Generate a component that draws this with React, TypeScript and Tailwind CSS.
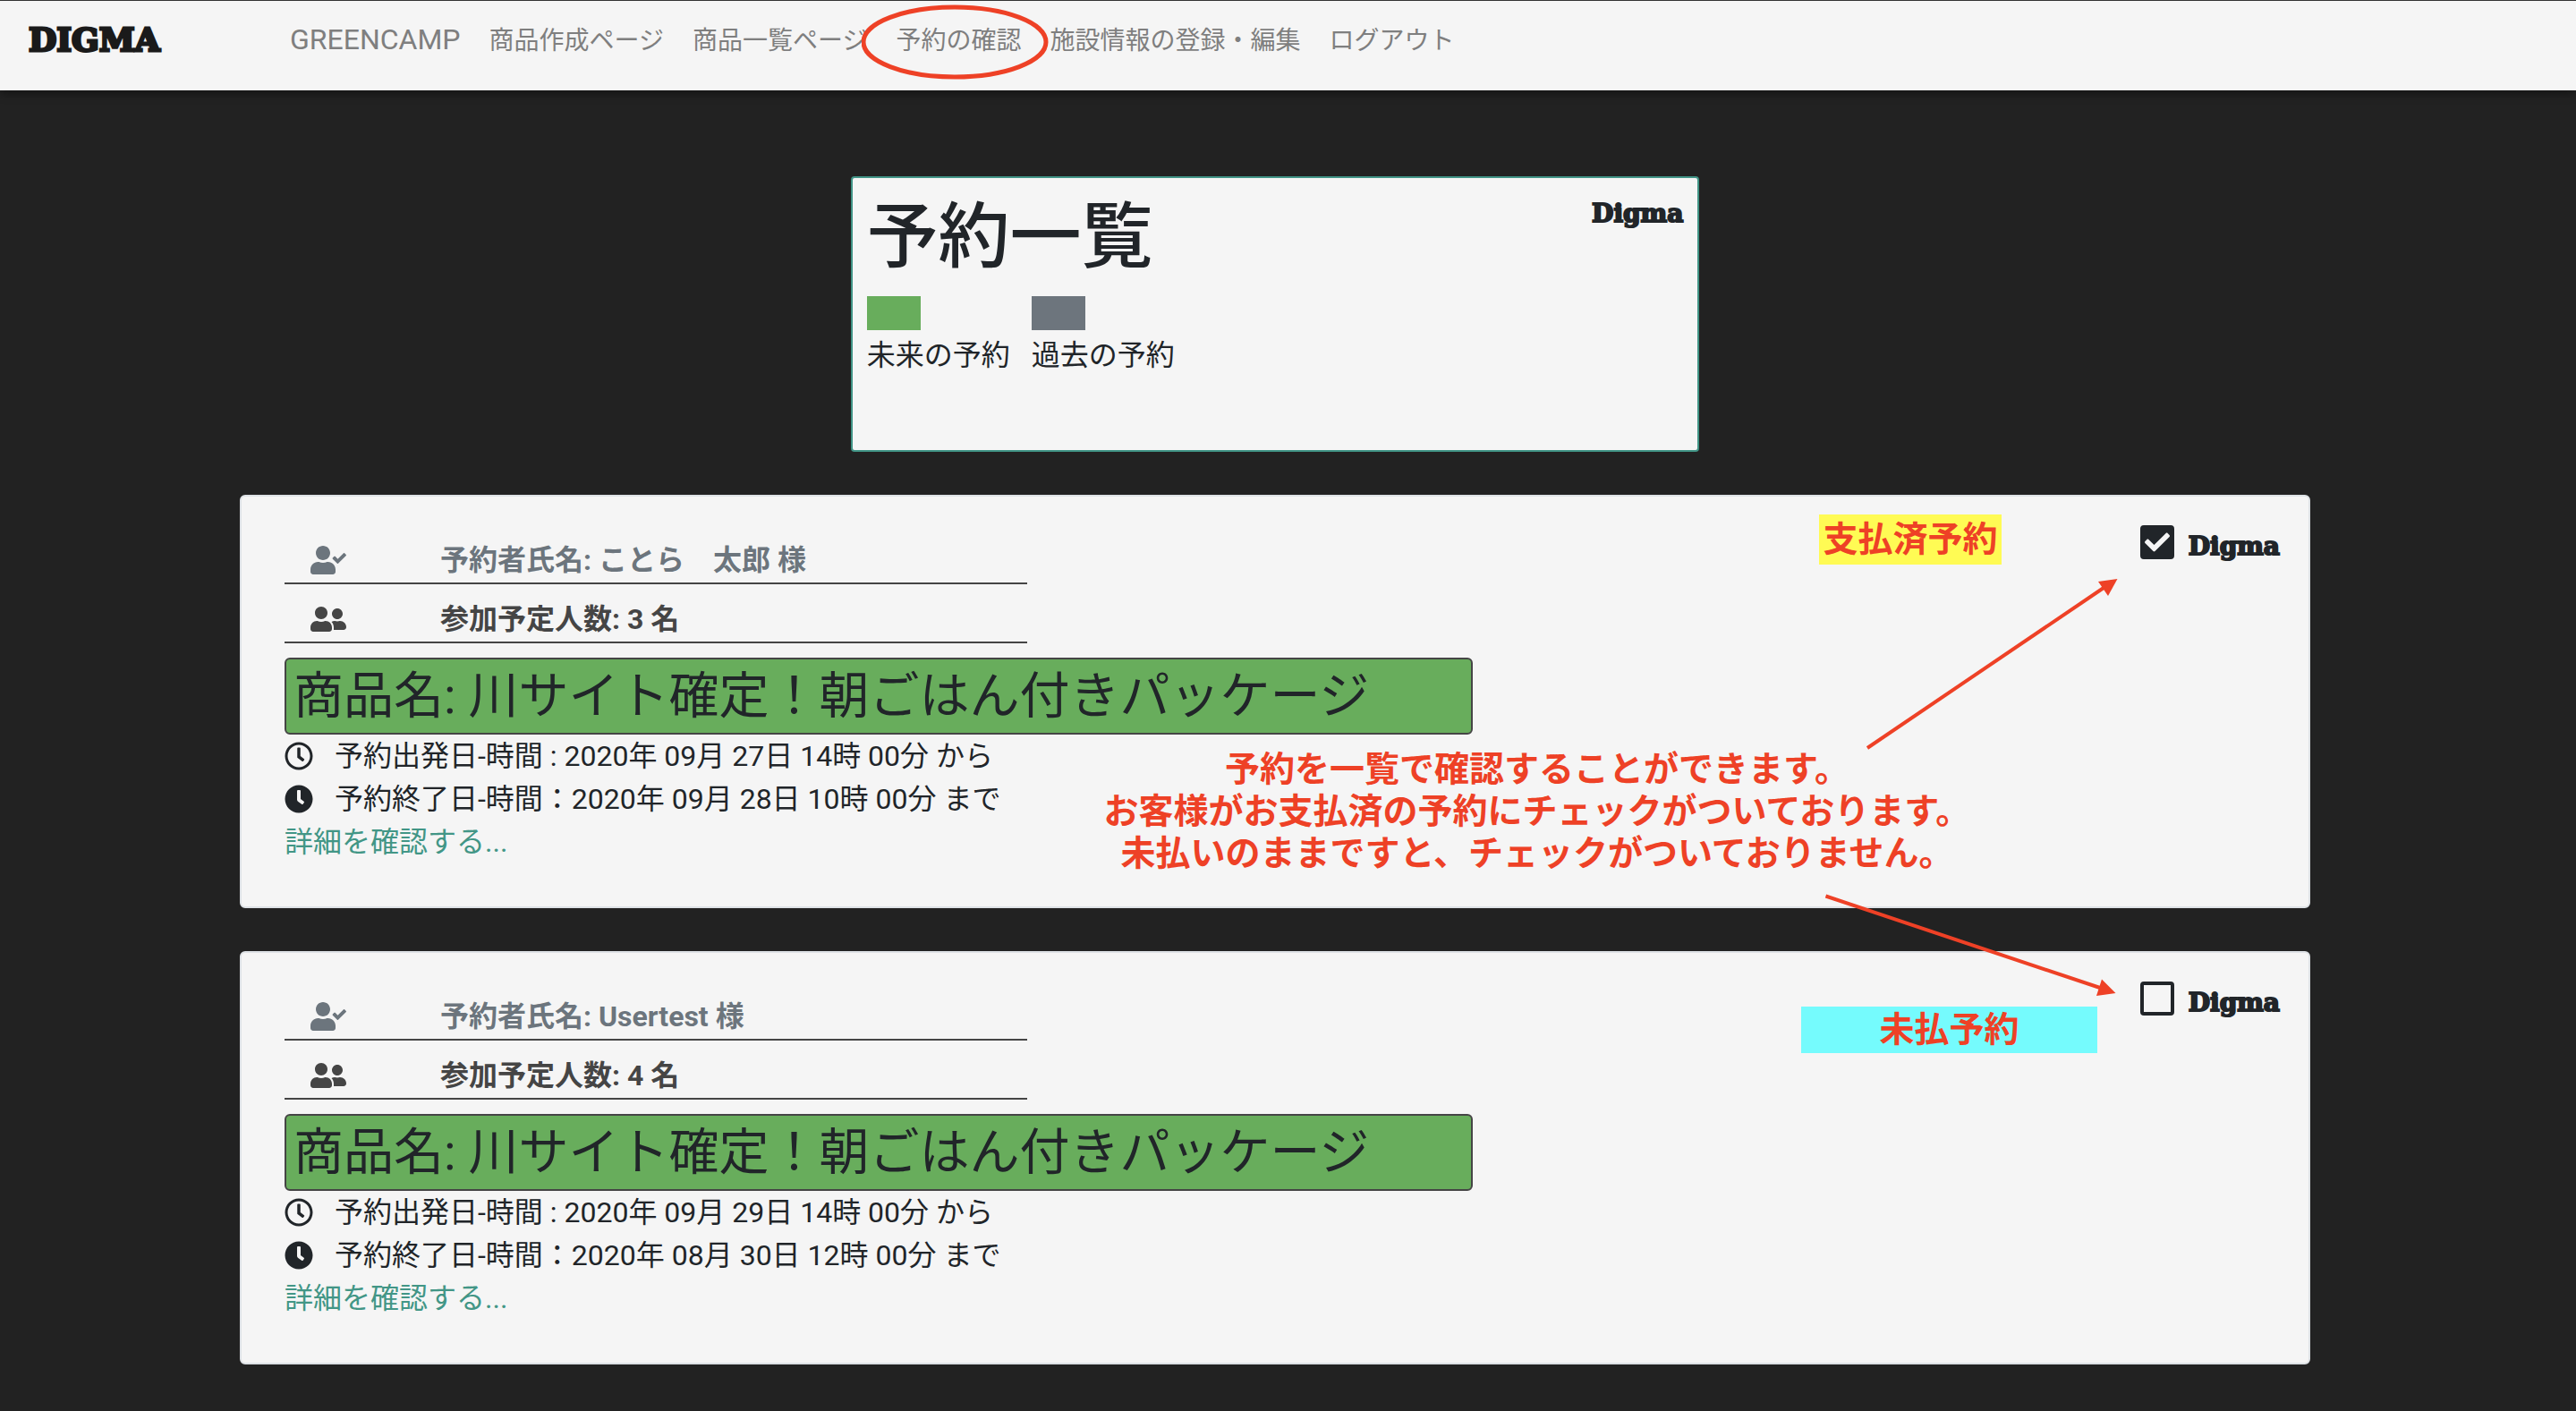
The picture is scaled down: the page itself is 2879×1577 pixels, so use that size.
import React from "react";
import {
  FaCheck,
  FaClock,
  FaRegClock,
  FaUserCheck,
  FaUserFriends,
} from "react-icons/fa";

type Reservation = {
  id: string;
  guest: string;
  people: number;
  product: string;
  start: string;
  end: string;
  paid: boolean;
};

const reservations: Reservation[] = [
  {
    id: "r1",
    guest: "ことら　太郎",
    people: 3,
    product: "川サイト確定！朝ごはん付きパッケージ",
    start: "2020年 09月 27日 14時 00分",
    end: "2020年 09月 28日 10時 00分",
    paid: true,
  },
  {
    id: "r2",
    guest: "Usertest",
    people: 4,
    product: "川サイト確定！朝ごはん付きパッケージ",
    start: "2020年 09月 29日 14時 00分",
    end: "2020年 08月 30日 12時 00分",
    paid: false,
  },
];

function NavLink({ children, circled }: { children: string; circled?: boolean }) {
  return (
    <li className="relative">
      <a href="#" className="block text-[28px] leading-[58px] whitespace-nowrap">
        {children}
      </a>
      {circled && (
        <svg
          className="pointer-events-none absolute -top-4 left-1/2 h-[92px] w-[216px] -translate-x-1/2"
          viewBox="0 0 216 92"
          fill="none"
          aria-hidden="true"
        >
          <ellipse cx="104" cy="46" rx="102" ry="39" stroke="#ee4126" strokeWidth="5" />
        </svg>
      )}
    </li>
  );
}

function Navbar() {
  return (
    <nav className="flex h-[101px] items-start border-t border-[#333] bg-[#f5f5f5] pt-4 pl-8 shadow-[0_4px_10px_rgba(0,0,0,0.4)]">
      <a
        href="#"
        className="block w-[292px] shrink-0 font-['DejaVu_Serif',serif] text-[36px] leading-[54px] font-bold text-[#1a1a1a] [-webkit-text-stroke:3px_#1a1a1a]"
      >
        DIGMA
      </a>
      <ul className="flex gap-8 text-[#7f7f7f]">
        <li>
          <a href="#" className="block text-[32px] leading-[54px]">
            GREENCAMP
          </a>
        </li>
        <NavLink>商品作成ページ</NavLink>
        <NavLink>商品一覧ページ</NavLink>
        <NavLink circled>予約の確認</NavLink>
        <NavLink>施設情報の登録・編集</NavLink>
        <NavLink>ログアウト</NavLink>
      </ul>
    </nav>
  );
}

function Wordmark() {
  return (
    <span className="block font-['DejaVu_Serif',serif] text-[28px] leading-7 font-bold [-webkit-text-stroke:2px_#212529]">
      Digma
    </span>
  );
}

function TitleCard() {
  return (
    <header className="flex w-[41%] items-start justify-between rounded border-2 border-[#419486] bg-[#f5f5f5] px-4 pt-[18px] pb-[82px]">
      <div>
        <h1 className="text-[80px] leading-[96px] font-medium">予約一覧</h1>
        <ul className="mt-[18px] flex gap-6">
          <li>
            <div className="mb-1 h-[38px] w-[60px] bg-[#68ad5c]" />
            未来の予約
          </li>
          <li>
            <div className="mb-1 h-[38px] w-[60px] bg-[#6d757d]" />
            過去の予約
          </li>
        </ul>
      </div>
      <div className="pt-2">
        <Wordmark />
      </div>
    </header>
  );
}

function ReservationCard({
  item,
  children,
}: {
  item: Reservation;
  children?: React.ReactNode;
}) {
  return (
    <article className="relative flex items-start justify-between rounded-md border-2 border-[#dee2e6] bg-[#f5f5f5]">
      <div className="box-content w-[57.5%] p-12">
        <div className="flex w-5/8 items-center border-b-2 border-[#454545] pb-0.5 leading-[46px] font-bold text-[#6c757d]">
          <div className="w-[174px] pl-[29px]">
            <FaUserCheck className="h-8 w-10" />
          </div>
          <p>予約者氏名: {item.guest} 様</p>
        </div>
        <div className="flex w-5/8 items-center border-b-2 border-[#454545] pt-4 pb-0.5 leading-[46px] font-bold text-[#454545]">
          <div className="w-[174px] pl-[29px]">
            <FaUserFriends className="h-8 w-10" />
          </div>
          <p>
            参加予定人数: {item.people} 名
          </p>
        </div>
        <h2 className="mt-4 rounded-md border-2 border-[#454545] bg-[#68ad5c] px-2 py-2 text-[56px] leading-[66px] whitespace-nowrap">
          商品名: {item.product}
        </h2>
        <p className="flex items-center gap-6">
          <FaRegClock className="h-8 w-8" />
          予約出発日-時間 : {item.start} から
        </p>
        <p className="flex items-center gap-6">
          <FaClock className="h-8 w-8" />
          予約終了日-時間：{item.end} まで
        </p>
        <a href="#" className="block w-fit text-[#429686]">
          詳細を確認する...
        </a>
      </div>
      <label className="flex items-end gap-4 pt-8 pr-8">
        <span className="relative">
          <input
            type="checkbox"
            defaultChecked={item.paid}
            className="peer block size-[38px] appearance-none rounded border-4 border-[#212529] checked:bg-[#212529]"
          />
          <FaCheck className="pointer-events-none absolute top-[5px] left-[5px] hidden size-7 text-[#f5f5f5] peer-checked:block" />
        </span>
        <Wordmark />
      </label>
      {children}
    </article>
  );
}

function Arrows() {
  return (
    <svg
      className="pointer-events-none absolute top-[85px] right-[210px] z-10 h-[480px] w-[340px]"
      viewBox="0 0 340 480"
      fill="#ee4126"
      stroke="#ee4126"
      aria-hidden="true"
    >
      <path d="M57 196 324 15" strokeWidth="4" />
      <path d="M336.500 7 315 10 326 26Z" stroke="none" />
      <path d="M10.500 361.500 320 465" strokeWidth="4" />
      <path d="M334.500 470 319 454.500 313 473Z" stroke="none" />
    </svg>
  );
}

export default function App() {
  const [paid, unpaid] = reservations;
  return (
    <div
      lang="ja"
      className="min-h-screen bg-[#222] pb-12 font-['Roboto','Noto_Sans_CJK_JP',sans-serif] text-[32px] leading-[48px] text-[#212529]"
    >
      <Navbar />
      <main className="mr-[29px] pt-24">
        <div className="mx-auto flex max-w-[2314px] flex-col gap-12">
          <div className="flex justify-center">
            <TitleCard />
          </div>
          <ReservationCard item={paid}>
            <strong className="absolute top-5 right-[343px] w-[204px] bg-[#fffb54] text-center text-[39px] leading-[56px] text-[#ee4126]">
              支払済予約
            </strong>
            <p className="absolute top-[282px] right-[362px] w-[1000px] text-center text-[39px] leading-[47px] font-bold text-[#ee4126]">
              予約を一覧で確認することができます。
              <br />
              お客様がお支払済の予約にチェックがついております。
              <br />
              未払いのままですと、チェックがついておりません。
            </p>
            <Arrows />
          </ReservationCard>
          <ReservationCard item={unpaid}>
            <strong className="absolute top-[60px] right-[236px] w-[331px] bg-[#75fbfd] text-center text-[39px] leading-[52px] text-[#ee4126]">
              未払予約
            </strong>
          </ReservationCard>
        </div>
      </main>
    </div>
  );
}
